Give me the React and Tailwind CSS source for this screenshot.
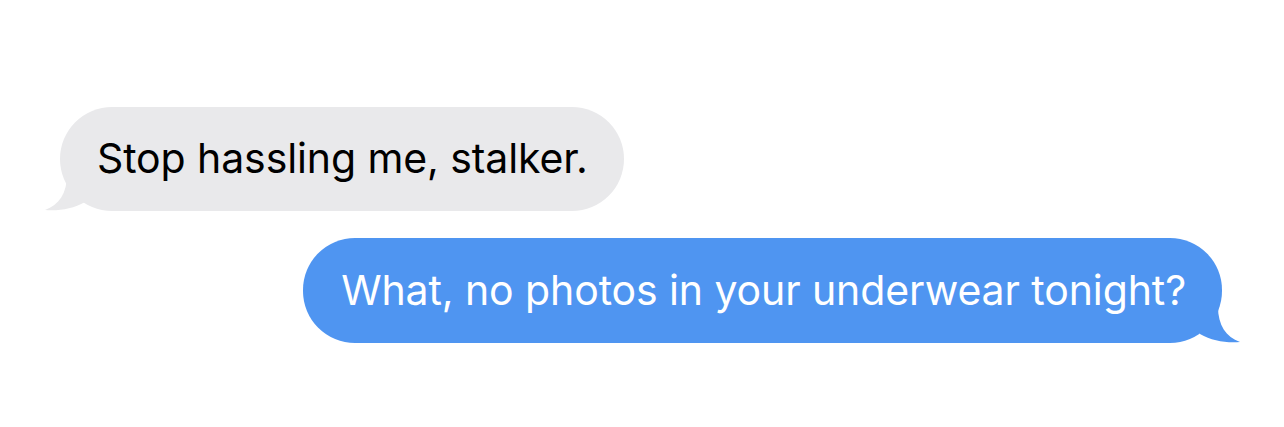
export default function App() {
  return (
    <div className="min-h-[427px] w-[1284px] bg-white px-[60px] pt-[107px] font-['Inter','Liberation_Sans',sans-serif]">
      {/* incoming */}
      <div className="flex">
        <div className="relative flex h-[104px] items-center rounded-[52px] bg-[#e9e9eb] pl-[37px] pr-[36px] text-[41px] tracking-[-0.1px] text-black">
          <svg className="absolute bottom-0 left-[-15px]" width="45" height="36" viewBox="0 0 45 36">
            <path d="M22 0 C22 18 14 30 0 35 C14 36 28 34 40 27 L40 0 Z" fill="#e9e9eb" />
          </svg>
          <span className="relative">Stop hassling me, stalker.</span>
        </div>
      </div>

      {/* outgoing */}
      <div className="mt-[27px] flex justify-end pr-[2px]">
        <div className="relative flex h-[105px] items-center rounded-[52px] bg-[#4f95f1] pl-[38px] pr-[36px] text-[41px] tracking-[-0.1px] text-white">
          <svg className="absolute bottom-0 right-[-18px]" width="45" height="36" viewBox="0 0 45 36">
            <path d="M23 0 C23 18 31 30 45 35 C31 36 17 34 5 27 L5 0 Z" fill="#4f95f1" />
          </svg>
          <span className="relative">What, no photos in your underwear tonight?</span>
        </div>
      </div>
    </div>
  );
}
